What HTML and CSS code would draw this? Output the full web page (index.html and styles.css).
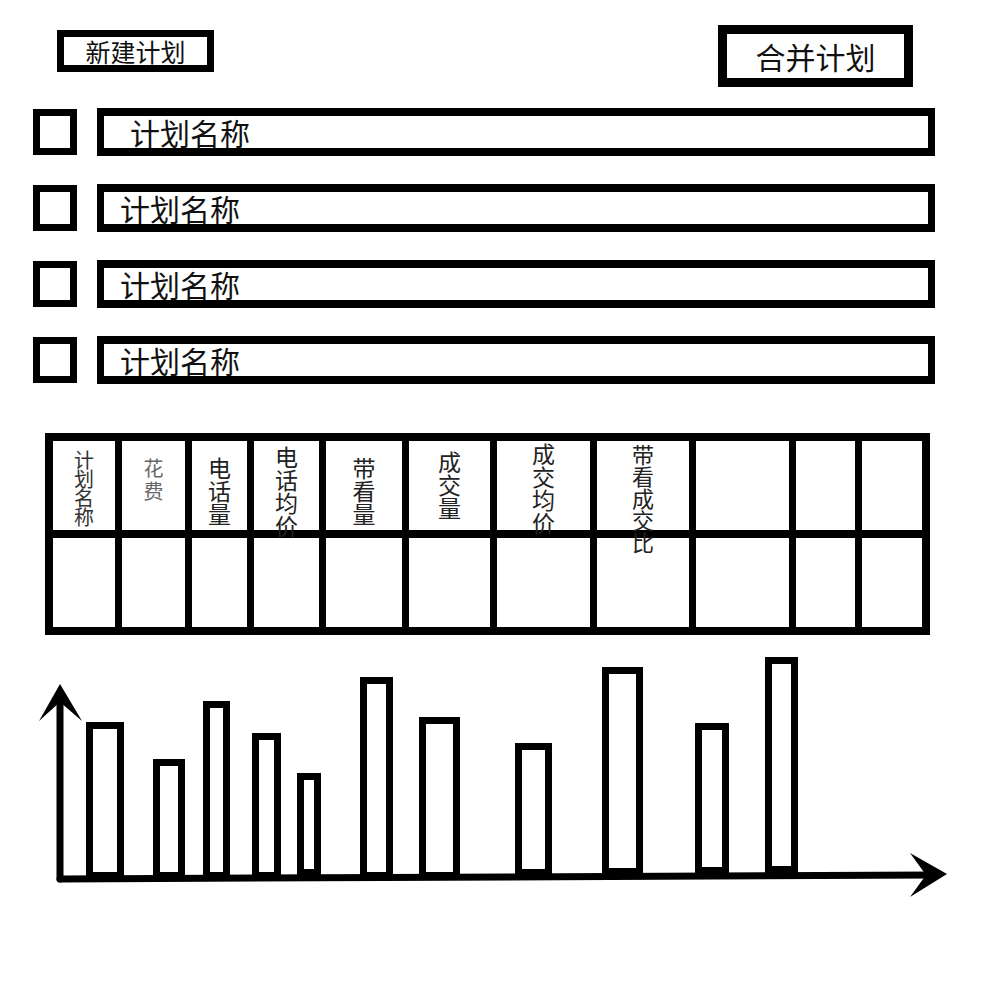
FILE: index.html
```html
<!DOCTYPE html>
<html lang="zh-CN">
<head>
<meta charset="UTF-8">
<meta name="viewport" content="width=device-width, initial-scale=1.0">
<title>计划</title>
<link rel="stylesheet" href="styles.css">
</head>
<body>
<div class="toolbar">
<button class="btn btn-new">新建计划</button>
<button class="btn btn-merge">合并计划</button>
</div>
<ul class="plans">
<li class="plan"><span class="check"></span><div class="plan-name indent"><span>计划名称</span></div></li>
<li class="plan"><span class="check"></span><div class="plan-name"><span>计划名称</span></div></li>
<li class="plan"><span class="check"></span><div class="plan-name"><span>计划名称</span></div></li>
<li class="plan"><span class="check"></span><div class="plan-name"><span>计划名称</span></div></li>
</ul>
<div class="stats">
<div class="cell head mid"><span class="label small">计划名称</span></div>
<div class="cell head sink"><span class="label small muted">花费</span></div>
<div class="cell head sink"><span class="label">电话量</span></div>
<div class="cell head rise"><span class="label">电话均价</span></div>
<div class="cell head sink"><span class="label">带看量</span></div>
<div class="cell head mid"><span class="label">成交量</span></div>
<div class="cell head lift"><span class="label">成交均价</span></div>
<div class="cell head lift"><span class="label narrow">带看成交比</span></div>
<div class="cell head"></div>
<div class="cell head"></div>
<div class="cell head"></div>
<div class="cell"></div>
<div class="cell"></div>
<div class="cell"></div>
<div class="cell"></div>
<div class="cell"></div>
<div class="cell"></div>
<div class="cell"></div>
<div class="cell"></div>
<div class="cell"></div>
<div class="cell"></div>
<div class="cell"></div>
</div>
<svg class="chart" width="1000" height="265" viewBox="0 645 1000 265">
<g class="bars">
<rect x="89.5" y="725.5" width="31" height="150"/>
<rect x="156.5" y="762.5" width="25" height="113"/>
<rect x="206.5" y="704.5" width="20" height="171"/>
<rect x="255.5" y="736.5" width="22" height="139"/>
<rect x="300.5" y="776.5" width="17" height="96"/>
<rect x="363.5" y="680.5" width="26" height="195"/>
<rect x="422.5" y="720.5" width="34" height="155"/>
<rect x="518.5" y="746.5" width="30" height="126"/>
<rect x="605.5" y="670.5" width="34" height="201"/>
<rect x="698.5" y="726.5" width="27" height="144"/>
<rect x="768.5" y="660.5" width="26" height="209"/>
</g>
<g class="axes">
<line x1="60" y1="879" x2="60" y2="700"/>
<line x1="60" y1="879" x2="935" y2="875"/>
</g>
<polygon class="arrow" points="60,684 82,721 60,702 39,721"/>
<polygon class="arrow" points="947,874 910,853 926,875 910,897"/>
</svg>
</body>
</html>
```
FILE: styles.css
```css
body {
margin: 0;
font-family: "Noto Sans CJK SC", "Noto Sans", sans-serif;
color: #111;
background: #fff;
}
.toolbar {
display: flex;
justify-content: space-between;
align-items: flex-start;
padding: 25px 87px 0 57px;
}
.btn {
box-sizing: border-box;
margin: 0;
padding: 0;
background: #fff;
color: #111;
border: solid #000;
font-family: inherit;
line-height: 1;
cursor: pointer;
}
.btn-new {
margin-top: 5px;
width: 157px;
height: 42px;
border-width: 7px;
font-size: 25px;
}
.btn-merge {
width: 195px;
height: 62px;
border-width: 9px;
font-size: 30px;
}
.plans {
list-style: none;
margin: 21px 0 0;
padding: 0 0 0 33px;
display: flex;
flex-direction: column;
gap: 28px;
}
.plan {
display: flex;
align-items: center;
gap: 20px;
height: 48px;
}
.check {
box-sizing: border-box;
width: 44px;
height: 46px;
border: 7px solid #000;
}
.plan-name {
box-sizing: border-box;
width: 838px;
height: 48px;
border: solid #000;
border-width: 8px 7px;
padding-left: 16px;
font-size: 30px;
line-height: 1;
}
.plan-name span {
display: block;
margin-top: 1px;
}
.plan-name.indent {
padding-left: 26px;
}
.stats {
box-sizing: border-box;
width: 885px;
margin: 49px 0 0 45px;
border: 8px solid #000;
background: #000;
display: grid;
grid-template-columns: 62px 63px 55px 65px 76px 81px 93px 92px 93px 59px 60px;
grid-template-rows: 89px 89px;
gap: 8px 7px;
}
.cell {
background: #fff;
}
.head {
box-sizing: border-box;
position: relative;
z-index: 1;
display: flex;
justify-content: center;
align-items: flex-start;
}
.head.lift {
padding-top: 1px;
}
.head.rise {
padding-top: 4px;
}
.head.mid {
padding-top: 9px;
}
.head.sink {
padding-top: 15px;
}
.label {
display: block;
width: 1em;
font-size: 23px;
line-height: 1;
color: #222;
word-break: break-all;
}
.label.small {
font-size: 20px;
line-height: 19px;
color: #333;
}
.label.narrow {
font-size: 22px;
}
.label.muted {
color: #666;
line-height: 23px;
}
.chart {
display: block;
margin-top: 10px;
}
.bars rect {
fill: #fff;
stroke: #000;
stroke-width: 7;
}
.axes line {
stroke: #000;
stroke-width: 7;
stroke-linecap: round;
}
.arrow {
fill: #000;
}
```
